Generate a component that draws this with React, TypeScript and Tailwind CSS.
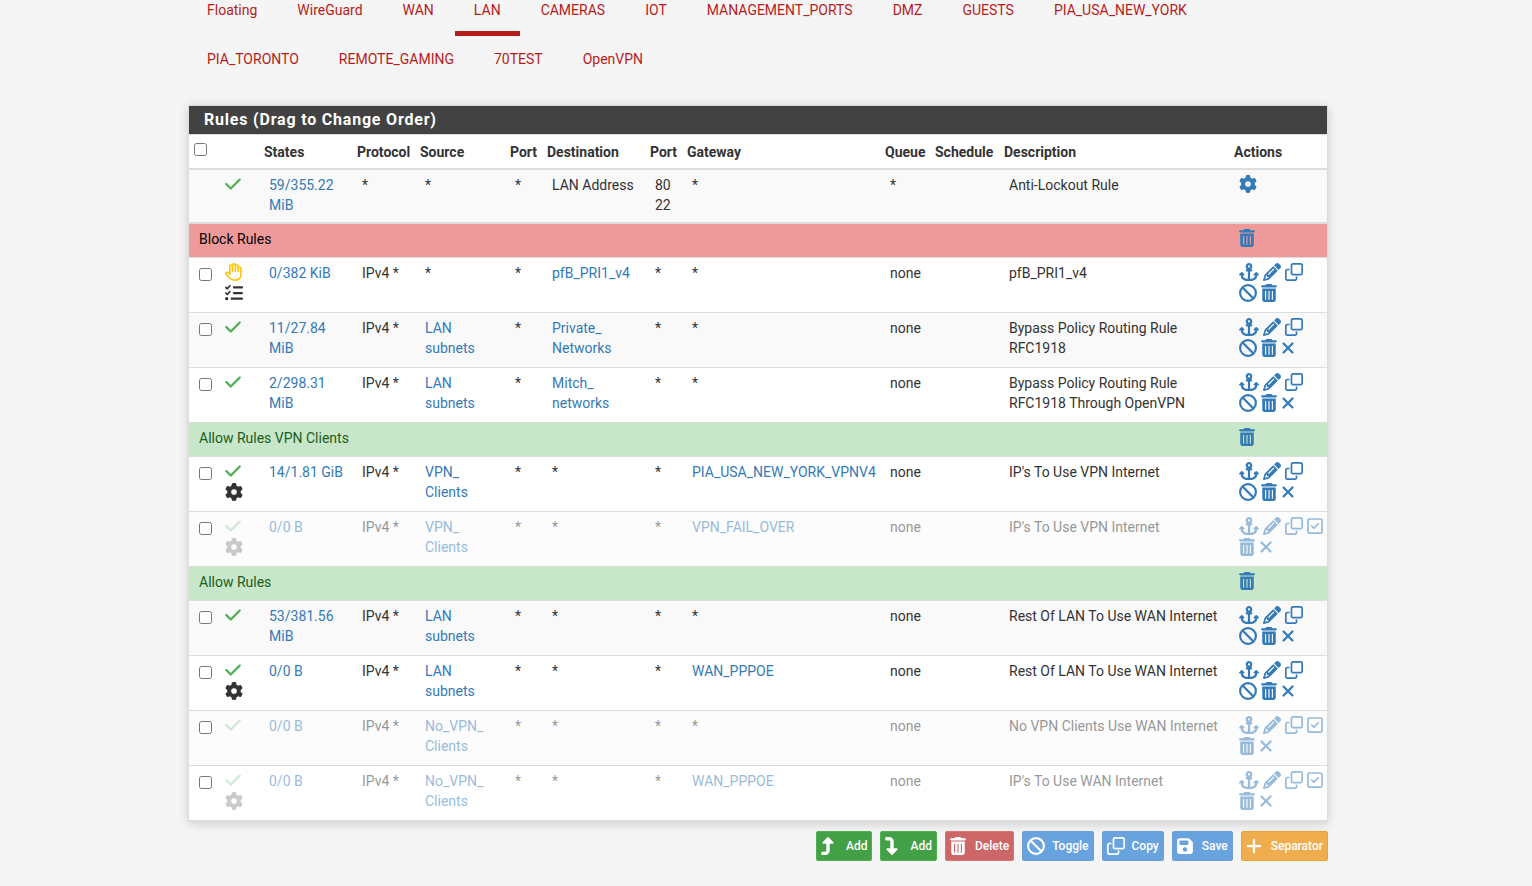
import type { ReactNode } from "react";
import { clsx } from "clsx";
import type { IconType } from "react-icons";
import {
  FaAnchor,
  FaBan,
  FaCheck,
  FaFloppyDisk,
  FaGear,
  FaListCheck,
  FaPencil,
  FaPlus,
  FaRegClone,
  FaRegHand,
  FaRegSquareCheck,
  FaTrashCan,
  FaTurnDown,
  FaTurnUp,
  FaXmark,
} from "react-icons/fa6";

const tabs = [
  "Floating",
  "WireGuard",
  "WAN",
  "LAN",
  "CAMERAS",
  "IOT",
  "MANAGEMENT_PORTS",
  "DMZ",
  "GUESTS",
  "PIA_USA_NEW_YORK",
  "PIA_TORONTO",
  "REMOTE_GAMING",
  "70TEST",
  "OpenVPN",
];

const columns = [
  { label: "States", width: "w-[93px]" },
  { label: "Protocol", width: "w-[63px]" },
  { label: "Source", width: "w-[90px]" },
  { label: "Port", width: "w-[37px]" },
  { label: "Destination", width: "w-[103px]" },
  { label: "Port", width: "w-[37px]" },
  { label: "Gateway", width: "w-[198px]" },
  { label: "Queue", width: "w-[50px]" },
  { label: "Schedule", width: "w-[69px]" },
  { label: "Description", width: "" },
  { label: "Actions", width: "w-[98px]" },
];

interface Rule {
  kind: "rule";
  states: string;
  source?: string;
  destination?: string;
  gateway?: string;
  description: string;
  block?: boolean;
  advanced?: boolean;
  disabled?: boolean;
  striped?: boolean;
  noClear?: boolean;
}

interface Separator {
  kind: "separator";
  label: string;
  color: "red" | "green";
}

const rows: (Rule | Separator)[] = [
  { kind: "separator", label: "Block Rules", color: "red" },
  { kind: "rule", states: "0/382 KiB", destination: "pfB_PRI1_v4", description: "pfB_PRI1_v4", block: true, noClear: true },
  { kind: "rule", states: "11/27.84 MiB", source: "LAN subnets", destination: "Private_Networks", description: "Bypass Policy Routing Rule RFC1918", striped: true },
  { kind: "rule", states: "2/298.31 MiB", source: "LAN subnets", destination: "Mitch_networks", description: "Bypass Policy Routing Rule RFC1918 Through OpenVPN" },
  { kind: "separator", label: "Allow Rules VPN Clients", color: "green" },
  { kind: "rule", states: "14/1.81 GiB", source: "VPN_Clients", gateway: "PIA_USA_NEW_YORK_VPNV4", description: "IP's To Use VPN Internet", advanced: true },
  { kind: "rule", states: "0/0 B", source: "VPN_Clients", gateway: "VPN_FAIL_OVER", description: "IP's To Use VPN Internet", advanced: true, disabled: true, striped: true },
  { kind: "separator", label: "Allow Rules", color: "green" },
  { kind: "rule", states: "53/381.56 MiB", source: "LAN subnets", description: "Rest Of LAN To Use WAN Internet", striped: true },
  { kind: "rule", states: "0/0 B", source: "LAN subnets", gateway: "WAN_PPPOE", description: "Rest Of LAN To Use WAN Internet", advanced: true },
  { kind: "rule", states: "0/0 B", source: "No_VPN_Clients", description: "No VPN Clients Use WAN Internet", disabled: true, striped: true },
  { kind: "rule", states: "0/0 B", source: "No_VPN_Clients", gateway: "WAN_PPPOE", description: "IP's To Use WAN Internet", advanced: true, disabled: true },
];

const buttons = [
  { label: "Add", icon: FaTurnUp, color: "bg-[#43a047] border-[#4caf50]" },
  { label: "Add", icon: FaTurnDown, color: "bg-[#43a047] border-[#4caf50]" },
  { label: "Delete", icon: FaTrashCan, color: "bg-[#cd6767] border-[#e07272]" },
  { label: "Toggle", icon: FaBan, color: "bg-[#69a3df] border-[#6d9fd0]" },
  { label: "Copy", icon: FaRegClone, color: "bg-[#69a3df] border-[#6d9fd0]" },
  { label: "Save", icon: FaFloppyDisk, color: "bg-[#69a3df] border-[#6d9fd0]" },
  { label: "Separator", icon: FaPlus, color: "bg-[#f0ad4e] border-[#eea236]" },
];

// Glyphs that are not square, the rest are as wide as they are high
const iconWidths = new Map<IconType, string>([
  [FaAnchor, "w-5"],
  [FaTrashCan, "w-4"],
  [FaCheck, "w-4"],
  [FaRegSquareCheck, "w-4"],
  [FaFloppyDisk, "w-4"],
  [FaPlus, "w-4"],
  [FaXmark, "w-3.5"],
  [FaTurnUp, "w-3.5"],
  [FaTurnDown, "w-3.5"],
]);

function Icon({ icon: Glyph, className }: { icon: IconType; className?: string }) {
  return <Glyph className={clsx("h-[18px] shrink-0", iconWidths.get(Glyph) ?? "w-[18px]", className)} />;
}

function ActionLink({ icon, label }: { icon: IconType; label: string }) {
  return (
    <a href="#" title={label} aria-label={label} className="text-[#337ab7]">
      <Icon icon={icon} />
    </a>
  );
}

function Cell({ children, className }: { children?: ReactNode; className?: string }) {
  return <td className={clsx("py-[5px] pr-1 pl-2.5 align-top", className)}>{children}</td>;
}

// Alias names may break after each underscore
function Alias({ name }: { name?: string }) {
  if (!name) return <>*</>;
  return (
    <a href="#" className="text-[#337ab7]">
      {name.split("_").map((part, i) => (
        <span key={i}>
          {i > 0 && (
            <>
              _<wbr />
            </>
          )}
          {part}
        </span>
      ))}
    </a>
  );
}

function SeparatorRow({ label, color }: Separator) {
  return (
    <tr className={clsx("h-[34px] border-b border-[#ddd]", color === "red" ? "bg-[#ef9a9a] text-black" : "bg-[#c8e6c9] text-[#1b5e20]")}>
      <Cell className="whitespace-nowrap">{label}</Cell>
      <td colSpan={11} />
      <Cell>
        <ActionLink icon={FaTrashCan} label="Delete separator" />
      </Cell>
    </tr>
  );
}

function RuleRow({ rule }: { rule: Rule }) {
  const { disabled } = rule;
  const fade = disabled && "opacity-50";
  const fadeIcon = disabled && "opacity-25";

  return (
    <tr className={clsx("h-[55px] border-b border-[#ddd]", rule.striped && (disabled ? "bg-[#fcfcfc]" : "bg-[#f9f9f9]"))}>
      <td className="pt-2.5 pl-2.5 align-top">
        <input type="checkbox" aria-label={`Select ${rule.description}`} className="block size-[13px]" />
      </td>
      <Cell>
        <div className={clsx("flex flex-col gap-[3px]", fadeIcon)}>
          {rule.block ? <Icon icon={FaRegHand} className="text-[#ffc40d]" /> : <Icon icon={FaCheck} className="text-[#4caf50]" />}
          {rule.block && <Icon icon={FaListCheck} />}
          {rule.advanced && <Icon icon={FaGear} />}
        </div>
      </Cell>
      <Cell className={clsx(fade)}>
        <a href="#" className="text-[#337ab7]">
          {rule.states}
        </a>
      </Cell>
      <Cell className={clsx(fade)}>IPv4 *</Cell>
      <Cell className={clsx(fade)}>
        <Alias name={rule.source} />
      </Cell>
      <Cell className={clsx(fade)}>*</Cell>
      <Cell className={clsx(fade)}>
        <Alias name={rule.destination} />
      </Cell>
      <Cell className={clsx(fade)}>*</Cell>
      <Cell className={clsx("whitespace-nowrap", fade)}>
        {rule.gateway ? (
          <a href="#" className="text-[#337ab7]">
            {rule.gateway}
          </a>
        ) : (
          "*"
        )}
      </Cell>
      <Cell className={clsx(fade)}>none</Cell>
      <Cell />
      <Cell className={clsx(fade)}>{rule.description}</Cell>
      <Cell className={clsx(fade)}>
        <div className="flex flex-wrap gap-x-1 gap-y-[3px]">
          <ActionLink icon={FaAnchor} label="Move checked rules" />
          <ActionLink icon={FaPencil} label="Edit" />
          <ActionLink icon={FaRegClone} label="Copy" />
          {disabled ? <ActionLink icon={FaRegSquareCheck} label="Enable" /> : <ActionLink icon={FaBan} label="Disable" />}
          <ActionLink icon={FaTrashCan} label="Delete" />
          {!rule.noClear && <ActionLink icon={FaXmark} label="Clear states" />}
        </div>
      </Cell>
    </tr>
  );
}

export default function App() {
  return (
    <div className="min-h-screen bg-[#f5f5f5] pr-4 font-[Roboto,sans-serif] text-sm leading-5 text-[#333]">
      <div className="mx-auto max-w-[1140px]">
        <nav className="mb-5 flex flex-wrap gap-x-0.5 gap-y-[13px]">
          {tabs.map((tab) => (
            <a
              key={tab}
              href="#"
              className={clsx("border-b-[5px] px-[19px] pb-[11px] text-[#b71c1c]", tab === "LAN" ? "border-[#b71c1c]" : "border-transparent")}
            >
              {tab}
            </a>
          ))}
        </nav>

        <section className="border border-[#ddd] bg-white shadow-[0_2px_10px_rgba(0,0,0,0.16)]">
          <h2 className="border-b border-[#ddd] bg-[#424242] px-[15px] py-0.5 text-base leading-6 font-bold tracking-wider text-white">
            Rules (Drag to Change Order)
          </h2>
          <table className="w-full table-fixed border-collapse">
            <thead>
              <tr className="h-[34px] border-b-2 border-[#ddd] text-left">
                <th className="w-[26px] pb-1 pl-[5px]">
                  <input type="checkbox" aria-label="Select all rules" className="block size-[13px]" />
                </th>
                <th className="w-[44px]" />
                {columns.map((col, i) => (
                  <th key={i} className={clsx("px-[5px] font-bold whitespace-nowrap", col.width)}>
                    {col.label}
                  </th>
                ))}
              </tr>
            </thead>
            <tbody>
              <tr className="h-[54px] border-b-2 border-[#ddd] bg-[#f9f9f9]">
                <Cell />
                <Cell>
                  <Icon icon={FaCheck} className="text-[#4caf50]" />
                </Cell>
                <Cell>
                  <a href="#" className="text-[#337ab7]">
                    59/355.22 MiB
                  </a>
                </Cell>
                <Cell>*</Cell>
                <Cell>*</Cell>
                <Cell>*</Cell>
                <Cell className="whitespace-nowrap">LAN Address</Cell>
                <Cell>
                  80
                  <br />
                  22
                </Cell>
                <Cell>*</Cell>
                <Cell>*</Cell>
                <Cell />
                <Cell>Anti-Lockout Rule</Cell>
                <Cell>
                  <ActionLink icon={FaGear} label="Settings" />
                </Cell>
              </tr>
              {rows.map((row, i) => (row.kind === "separator" ? <SeparatorRow key={i} {...row} /> : <RuleRow key={i} rule={row} />))}
            </tbody>
          </table>
        </section>

        <div className="flex flex-wrap justify-end gap-2 py-[9px]">
          {buttons.map((button, i) => (
            <button
              key={i}
              type="button"
              className={clsx("flex h-[30px] items-center gap-[7px] rounded-xs border px-1 text-xs font-medium text-white", button.color)}
            >
              <span className="flex w-[18px]">
                <Icon icon={button.icon} />
              </span>
              {button.label}
            </button>
          ))}
        </div>
      </div>
    </div>
  );
}
